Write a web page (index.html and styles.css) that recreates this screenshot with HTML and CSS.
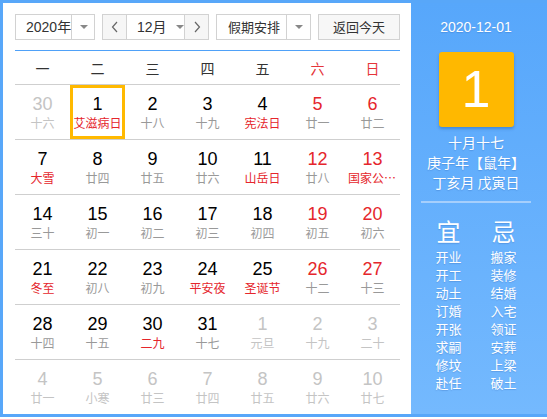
FILE: index.html
```html
<!DOCTYPE html>
<html lang="zh-CN">
<head>
<meta charset="utf-8">
<title>万年历</title>
<link rel="stylesheet" href="styles.css">
</head>
<body>
<div class="cal">
  <div class="main">
    <div class="toolbar">
      <div class="sel year">
        <span class="sel-text">2020年</span>
        <span class="sel-drop"><i class="tri"></i></span>
      </div>
      <div class="month-group">
        <span class="nav"><svg width="8" height="12" viewBox="0 0 8 12"><polyline points="6,1 1.5,6 6,11" fill="none" stroke="#666" stroke-width="1.2"/></svg></span>
        <span class="month"><span class="sel-text">12月</span><i class="tri"></i></span>
        <span class="nav"><svg width="8" height="12" viewBox="0 0 8 12"><polyline points="2,1 6.5,6 2,11" fill="none" stroke="#666" stroke-width="1.2"/></svg></span>
      </div>
      <div class="sel holiday">
        <span class="sel-text">假期安排</span>
        <span class="sel-drop"><i class="tri"></i></span>
      </div>
      <div class="btn">返回今天</div>
    </div>
    <div class="grid">
      <div class="week head">
        <span>一</span><span>二</span><span>三</span><span>四</span><span>五</span><span class="we">六</span><span class="we">日</span>
      </div>
      <div class="week">
        <div class="day other"><b>30</b><em>十六</em></div>
        <div class="day sel-day"><b>1</b><em class="fest">艾滋病日</em></div>
        <div class="day"><b>2</b><em>十八</em></div>
        <div class="day"><b>3</b><em>十九</em></div>
        <div class="day"><b>4</b><em class="fest">宪法日</em></div>
        <div class="day wk"><b>5</b><em>廿一</em></div>
        <div class="day wk"><b>6</b><em>廿二</em></div>
      </div>
      <div class="week">
        <div class="day"><b>7</b><em class="fest">大雪</em></div>
        <div class="day"><b>8</b><em>廿四</em></div>
        <div class="day"><b>9</b><em>廿五</em></div>
        <div class="day"><b>10</b><em>廿六</em></div>
        <div class="day"><b>11</b><em class="fest">山岳日</em></div>
        <div class="day wk"><b>12</b><em>廿八</em></div>
        <div class="day wk"><b>13</b><em class="fest">国家公祭日</em></div>
      </div>
      <div class="week">
        <div class="day"><b>14</b><em>三十</em></div>
        <div class="day"><b>15</b><em>初一</em></div>
        <div class="day"><b>16</b><em>初二</em></div>
        <div class="day"><b>17</b><em>初三</em></div>
        <div class="day"><b>18</b><em>初四</em></div>
        <div class="day wk"><b>19</b><em>初五</em></div>
        <div class="day wk"><b>20</b><em>初六</em></div>
      </div>
      <div class="week">
        <div class="day"><b>21</b><em class="fest">冬至</em></div>
        <div class="day"><b>22</b><em>初八</em></div>
        <div class="day"><b>23</b><em>初九</em></div>
        <div class="day"><b>24</b><em class="fest">平安夜</em></div>
        <div class="day"><b>25</b><em class="fest">圣诞节</em></div>
        <div class="day wk"><b>26</b><em>十二</em></div>
        <div class="day wk"><b>27</b><em>十三</em></div>
      </div>
      <div class="week">
        <div class="day"><b>28</b><em>十四</em></div>
        <div class="day"><b>29</b><em>十五</em></div>
        <div class="day"><b>30</b><em class="fest">二九</em></div>
        <div class="day"><b>31</b><em>十七</em></div>
        <div class="day other"><b>1</b><em>元旦</em></div>
        <div class="day other"><b>2</b><em>十九</em></div>
        <div class="day other"><b>3</b><em>二十</em></div>
      </div>
      <div class="week">
        <div class="day other"><b>4</b><em>廿一</em></div>
        <div class="day other"><b>5</b><em>小寒</em></div>
        <div class="day other"><b>6</b><em>廿三</em></div>
        <div class="day other"><b>7</b><em>廿四</em></div>
        <div class="day other"><b>8</b><em>廿五</em></div>
        <div class="day other"><b>9</b><em>廿六</em></div>
        <div class="day other"><b>10</b><em>廿七</em></div>
      </div>
    </div>
  </div>
  <div class="side">
    <div class="side-date">2020-12-01</div>
    <div class="big-day">1</div>
    <div class="lunar">
      <div>十月十七</div>
      <div>庚子年【鼠年】</div>
      <div>丁亥月 戊寅日</div>
    </div>
    <div class="sep"></div>
    <div class="yiji">
      <div class="col">
        <div class="yj-title">宜</div>
        <div>开业</div><div>开工</div><div>动土</div><div>订婚</div><div>开张</div><div>求嗣</div><div>修坟</div><div>赴任</div>
      </div>
      <div class="col">
        <div class="yj-title">忌</div>
        <div>搬家</div><div>装修</div><div>结婚</div><div>入宅</div><div>领证</div><div>安葬</div><div>上梁</div><div>破土</div>
      </div>
    </div>
  </div>
</div>
</body>
</html>
```

FILE: styles.css
```css
* { box-sizing: border-box; }
html, body { margin: 0; padding: 0; background: #fff; }
body {
  font-family: "Liberation Sans", "Noto Sans CJK SC", sans-serif;
  color: #000;
}
.cal {
  display: flex;
  width: 550px;
  height: 417px;
  border: 3px solid #58a7f9;
  border-right: none;
}
.main {
  width: 408px;
  background: #fff;
  padding: 11px 11px 0 12px;
}
.toolbar {
  display: flex;
  gap: 7px;
  height: 26px;
  font-family: "Noto Sans CJK SC", sans-serif;
  font-size: 13px;
  color: #333;
  white-space: nowrap;
}
.sel, .month-group, .btn {
  border: 1px solid #d2d2d2;
  height: 26px;
  display: flex;
  align-items: center;
  background: #fff;
  flex: none;
}
.sel-text { line-height: 24px; white-space: nowrap; }
.year { width: 80px; }
.year .sel-text { flex: 1; padding-left: 10px; font-family: "Liberation Sans", "Noto Sans CJK SC", sans-serif; font-size: 14px; }
.sel-drop {
  width: 25px;
  flex: none;
  height: 100%;
  border-left: 1px solid #d2d2d2;
  display: flex;
  align-items: center;
  justify-content: center;
}
.tri {
  display: block;
  width: 0; height: 0;
  border-left: 4px solid transparent;
  border-right: 4px solid transparent;
  border-top: 4px solid #888;
}
.month-group { width: 107px; }
.nav {
  width: 23px;
  flex: none;
  height: 100%;
  background: #f6f6f6;
  display: flex;
  align-items: center;
  justify-content: center;
}
.month {
  flex: 1;
  height: 100%;
  border-left: 1px solid #d2d2d2;
  border-right: 1px solid #d2d2d2;
  display: flex;
  align-items: center;
  padding-left: 10px;
  gap: 9px;
  font-family: "Liberation Sans", "Noto Sans CJK SC", sans-serif;
  font-size: 14px;
}
.holiday { width: 95px; }
.holiday .sel-text { flex: 1; padding-left: 11px; }
.holiday .sel-drop { width: 24px; }
.btn {
  width: 82px;
  justify-content: center;
  background: #f7f7f7;
  line-height: 24px;
}
.grid {
  margin-top: 10px;
  border-top: 1px solid #4fa1f8;
  width: 385px;
}
.week {
  display: grid;
  grid-template-columns: repeat(7, 55px);
}
.week.head {
  height: 33px;
  align-items: center;
  text-align: center;
  font-family: "Noto Sans CJK SC", sans-serif;
  font-size: 14px;
  color: #333;
}
.week.head .we { color: #e5353a; }
.week:not(.head) {
  border-top: 1px solid #cfcfcf;
  height: 55px;
}
.day {
  text-align: center;
  padding-top: 9px;
  height: 54px;
}
.day b {
  display: block;
  font-weight: normal;
  font-size: 18px;
  line-height: 20px;
  color: #000;
}
.day em {
  display: block;
  font-style: normal;
  font-family: "Noto Sans CJK SC", sans-serif;
  font-size: 12px;
  line-height: 18px;
  color: #999;
  max-width: 49px;
  margin: 0 auto;
  white-space: nowrap;
  overflow: hidden;
  text-overflow: ellipsis;
}
.day em.fest { color: #e5262c; }
.day.wk b { color: #e5262c; }
.day.other b, .day.other em { color: #c4c4c4; }
.day.sel-day {
  box-shadow: inset 0 0 0 3px #ffb900;
}
.side {
  width: 136px;
  background: linear-gradient(#57a7fb, #74b9fe);
  color: #fff;
  padding: 14px 6px 0 0;
  display: flex;
  flex-direction: column;
  align-items: center;
  text-shadow: 0 1px 1px rgba(30, 80, 160, 0.25);
}
.side-date {
  font-size: 14px;
  line-height: 20px;
}
.big-day {
  margin-top: 15px;
  width: 75px;
  height: 75px;
  background: #ffb800;
  border-radius: 3px;
  box-shadow: 0 2px 3px rgba(0, 60, 140, 0.3);
  font-size: 52px;
  line-height: 75px;
  text-align: center;
  text-shadow: none;
}
.lunar {
  margin-top: 5px;
  font-family: "Noto Sans CJK SC", sans-serif;
  font-size: 14px;
  line-height: 20px;
  text-align: center;
}
.sep {
  margin-top: 9px;
  width: 110px;
  height: 2px;
  background: #a6cffc;
}
.yiji {
  margin-top: 11px;
  display: flex;
  font-family: "Noto Sans CJK SC", sans-serif;
  font-size: 13px;
  line-height: 18px;
}
.col {
  width: 55px;
  text-align: center;
}
.yj-title {
  font-size: 24px;
  line-height: 34px;
}
```
